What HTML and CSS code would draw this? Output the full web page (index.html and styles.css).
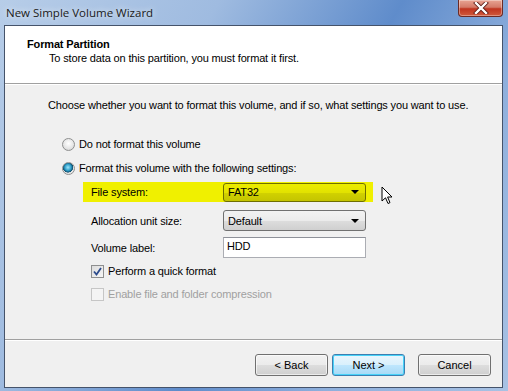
FILE: index.html
```html
<!DOCTYPE html>
<html lang="en">
<head>
    <meta charset="UTF-8">
    <title>New Simple Volume Wizard</title>
    <link rel="stylesheet" href="styles.css">
</head>
<body>
    <div class="window">
        <div class="titlebar">
            <span class="title">New Simple Volume Wizard</span>
            <div class="close-btn">
                <svg width="16" height="12" viewBox="0 0 16 12">
                    <path d="M3 1 L13 11 M13 1 L3 11" stroke="#5a1a14" stroke-width="4" stroke-linecap="square"/>
                    <path d="M3 1 L13 11 M13 1 L3 11" stroke="#ffffff" stroke-width="2.4" stroke-linecap="square"/>
                </svg>
            </div>
        </div>
        <div class="client">
            <div class="header">
                <div class="header-title">Format Partition</div>
                <div class="header-sub">To store data on this partition, you must format it first.</div>
            </div>
            <div class="content">
                <p class="intro">Choose whether you want to format this volume, and if so, what settings you want to use.</p>
                <div class="options">
                    <label class="radio-row">
                        <span class="radio"></span>
                        <span>Do not format this volume</span>
                    </label>
                    <label class="radio-row">
                        <span class="radio checked"></span>
                        <span>Format this volume with the following settings:</span>
                    </label>
                    <div class="settings">
                        <div class="field highlight">
                            <span class="field-label">File system:</span>
                            <div class="combo combo-yellow">
                                <span>FAT32</span>
                                <span class="arrow"></span>
                            </div>
                        </div>
                        <div class="field">
                            <span class="field-label">Allocation unit size:</span>
                            <div class="combo">
                                <span>Default</span>
                                <span class="arrow"></span>
                            </div>
                        </div>
                        <div class="field">
                            <span class="field-label">Volume label:</span>
                            <div class="textbox">HDD</div>
                        </div>
                        <label class="check-row">
                            <span class="checkbox">
                                <svg width="9" height="9" viewBox="0 0 9 9">
                                    <path d="M1 4.5 L3.5 7.5 L8 1" fill="none" stroke="#2c4b8c" stroke-width="1.8"/>
                                </svg>
                            </span>
                            <span>Perform a quick format</span>
                        </label>
                        <label class="check-row disabled">
                            <span class="checkbox"></span>
                            <span>Enable file and folder compression</span>
                        </label>
                    </div>
                </div>
            </div>
            <div class="footer">
                <button class="btn">&lt; Back</button>
                <button class="btn btn-default">Next &gt;</button>
                <button class="btn btn-cancel">Cancel</button>
            </div>
        </div>
        <svg class="cursor" width="13" height="20" viewBox="0 0 13 20">
            <path d="M1 1 L1 15 L4.5 11.8 L7 17.5 L9 16.6 L6.6 11 L11 11 Z" fill="#ffffff" stroke="#000000" stroke-width="1" stroke-linejoin="miter"/>
        </svg>
    </div>
</body>
</html>
```

FILE: styles.css
```css
body {
    margin: 0;
    font-family: 'Liberation Sans', Arial, sans-serif;
    font-size: 11px;
    color: #000000;
}

.window {
    position: relative;
    width: 508px;
    height: 391px;
    background: linear-gradient(120deg, #b7cde8 0%, #9fbbe0 30%, #5f8ccb 55%, #8eafdc 75%, #a8c2e4 100%);
    display: flex;
    flex-direction: column;
    overflow: hidden;
}

.titlebar {
    height: 25px;
    display: flex;
    justify-content: space-between;
    align-items: flex-start;
}

.title {
    padding: 5px 0 0 6px;
    font-family: 'Open Sans', 'Liberation Sans', sans-serif;
    font-size: 11.5px;
    color: #1a1a1a;
    text-shadow: 0 0 6px rgba(255, 255, 255, 0.9);
}

.close-btn {
    width: 45px;
    height: 17px;
    margin-right: 5px;
    border: 1px solid #6b2a25;
    border-top: none;
    border-radius: 0 0 4px 4px;
    background: linear-gradient(to bottom, #e8a493 0%, #d47a68 45%, #c0341f 55%, #cf5a3d 100%);
    box-shadow: inset 0 0 0 1px rgba(255, 255, 255, 0.35);
    display: flex;
    justify-content: center;
    align-items: center;
    box-sizing: border-box;
}

.client {
    flex: 1;
    margin: 0 5px 3px 4px;
    border: 1px solid #45536a;
    background-color: #f0f0f0;
    display: flex;
    flex-direction: column;
    white-space: nowrap;
    letter-spacing: -0.15px;
}

.header {
    height: 58px;
    flex-shrink: 0;
    background-color: #ffffff;
    border-bottom: 1px solid #a0a0a0;
    box-sizing: border-box;
    padding: 11px 0 0 22px;
}

.header-title {
    font-weight: bold;
    line-height: 14px;
}

.header-sub {
    padding-left: 22px;
    line-height: 14px;
}

.content {
    flex: 1;
    border-top: 1px solid #ffffff;
}

.intro {
    margin: 13px 0 0 43px;
    line-height: 14px;
}

.options {
    margin: 25px 0 0 57px;
}

.radio-row {
    display: flex;
    align-items: center;
    gap: 4px;
    height: 14px;
    margin-bottom: 10px;
}

.radio {
    width: 11px;
    height: 11px;
    border-radius: 50%;
    border: 1px solid #8e8f8f;
    background: radial-gradient(circle at 50% 40%, #ffffff 0%, #e4e4e4 60%, #c9c9c9 100%);
    flex-shrink: 0;
}

.radio.checked {
    background: radial-gradient(circle at 45% 40%, #9fe6fb 0%, #2f9ec9 35%, #0e4e6d 55%, #e2e2e2 60%, #f4f4f4 100%);
}

.settings {
    margin-left: 21px;
    margin-top: -3px;
}

.field {
    display: flex;
    align-items: center;
    height: 21px;
    margin-bottom: 6px;
    margin-left: 8px;
}

.field.highlight {
    background-color: #f0f000;
    margin-left: 0;
    padding-left: 8px;
    width: 282px;
    height: 20px;
    margin-bottom: 8px;
}

.field-label {
    width: 132px;
}

.combo {
    width: 143px;
    height: 21px;
    box-sizing: border-box;
    border: 1px solid #707070;
    border-radius: 3px;
    background: linear-gradient(to bottom, #f2f2f2 0%, #ebebeb 50%, #dddddd 51%, #cfcfcf 100%);
    display: flex;
    justify-content: space-between;
    align-items: center;
    padding: 0 6px 0 4px;
}

.combo-yellow {
    height: 19px;
    border-color: #6f6f00;
    background: linear-gradient(to bottom, #ecec00 0%, #e2e200 50%, #d2d200 51%, #c4c400 100%);
}

.arrow {
    width: 0;
    height: 0;
    border-left: 4px solid transparent;
    border-right: 4px solid transparent;
    border-top: 4px solid #000000;
}

.textbox {
    width: 143px;
    height: 21px;
    box-sizing: border-box;
    border: 1px solid #abadb3;
    border-top-color: #8e9199;
    background-color: #ffffff;
    padding: 2px 0 0 3px;
}

.check-row {
    display: flex;
    align-items: center;
    gap: 4px;
    height: 14px;
    margin: 0 0 9px 8px;
}

.checkbox {
    width: 11px;
    height: 11px;
    border: 1px solid #8e8f8f;
    background: linear-gradient(135deg, #dcdcdc 0%, #f6f6f6 100%);
    display: flex;
    justify-content: center;
    align-items: center;
    flex-shrink: 0;
}

.check-row.disabled {
    color: #a0a0a0;
}

.check-row.disabled .checkbox {
    border-color: #c6c6c6;
    background: #f4f4f4;
}

.footer {
    height: 48px;
    flex-shrink: 0;
    border-top: 1px solid #a0a0a0;
    box-shadow: inset 0 1px 0 #ffffff;
    display: flex;
    justify-content: flex-end;
    align-items: flex-start;
    padding: 14px 11px 0 0;
    box-sizing: border-box;
}

.btn {
    width: 73px;
    height: 22px;
    margin-left: 4px;
    border: 1px solid #707070;
    border-radius: 3px;
    background: linear-gradient(to bottom, #f2f2f2 0%, #ebebeb 50%, #dddddd 51%, #cfcfcf 100%);
    font-family: 'Liberation Sans', Arial, sans-serif;
    font-size: 11px;
    color: #000000;
    padding: 0;
    box-shadow: inset 0 0 0 1px rgba(255, 255, 255, 0.6);
}

.btn-default {
    border-color: #3c7fb1;
    background: linear-gradient(to bottom, #eaf6fd 0%, #d9f0fc 50%, #bee6fd 51%, #a7d9f5 100%);
    box-shadow: inset 0 0 0 1px #48d2f8;
}

.btn-cancel {
    margin-left: 13px;
}

.cursor {
    position: absolute;
    left: 381px;
    top: 186px;
}
```
